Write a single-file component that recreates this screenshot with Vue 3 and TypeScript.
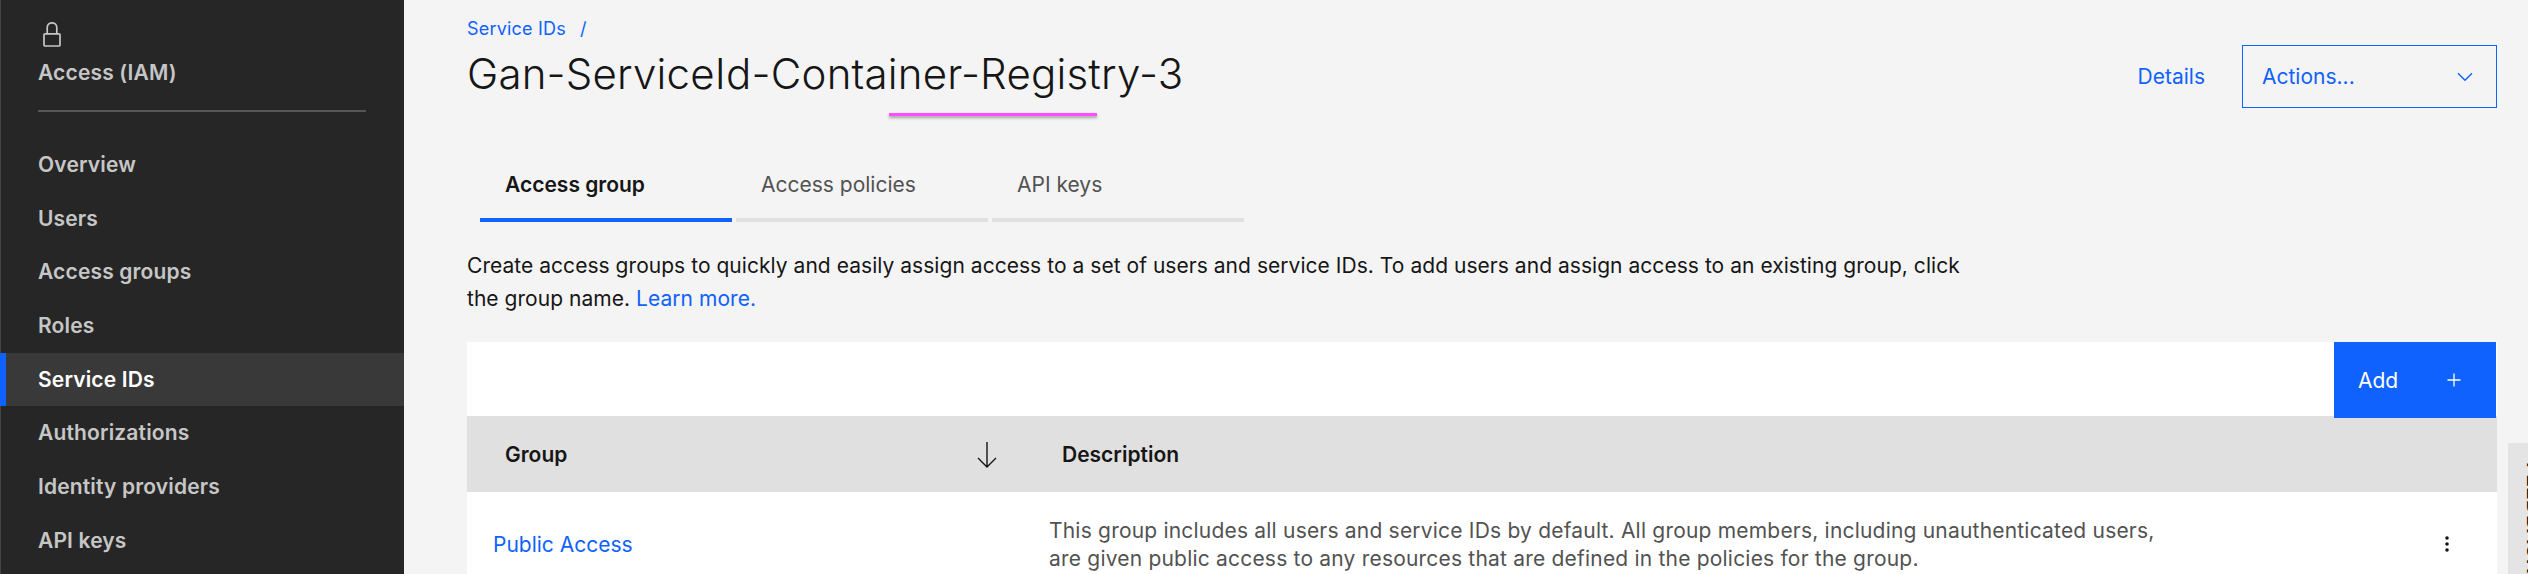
<script setup lang="ts">
const navItems = [
  { label: 'Overview' },
  { label: 'Users' },
  { label: 'Access groups' },
  { label: 'Roles' },
  { label: 'Service IDs', active: true },
  { label: 'Authorizations' },
  { label: 'Identity providers' },
  { label: 'API keys' },
]

const tabs = [
  { label: 'Access group', active: true },
  { label: 'Access policies' },
  { label: 'API keys' },
]
</script>

<template>
  <div class="page">
    <aside class="sidebar">
      <div class="side-head">
        <svg class="lock" width="18" height="25" viewBox="0 0 18 25" fill="none" stroke="#c6c6c6" stroke-width="1.7">
          <rect x="1" y="11.8" width="16" height="12.2" rx="1" />
          <path d="M4.2 11.8V5.6a4.8 4.8 0 0 1 9.6 0v6.2" />
        </svg>
        <div class="side-title">Access (IAM)</div>
      </div>
      <nav class="side-nav">
        <a v-for="item in navItems" :key="item.label" class="nav-item" :class="{ active: item.active }">{{ item.label }}</a>
      </nav>
    </aside>

    <main class="content">
      <header class="head">
        <div>
          <div class="crumb"><a>Service IDs</a><span class="slash">/</span></div>
          <h1 class="title">Gan-ServiceId-Container-Registry-3</h1>
        </div>
        <div class="head-actions">
          <a class="details">Details</a>
          <button class="actions">
            <span>Actions...</span>
            <svg width="16" height="10" viewBox="0 0 16 10" fill="none" stroke="#0f62fe" stroke-width="1.4"><path d="M1 1.2 8 8.2 15 1.2" /></svg>
          </button>
        </div>
      </header>

      <div class="tabs">
        <div v-for="tab in tabs" :key="tab.label" class="tab" :class="{ active: tab.active }">{{ tab.label }}</div>
      </div>

      <p class="intro">
        Create access groups to quickly and easily assign access to a set of users and service IDs. To add users and assign access to an existing group, click<br />
        the group name. <a>Learn more.</a>
      </p>

      <section class="table">
        <div class="toolbar">
          <button class="add">
            <span>Add</span>
            <svg width="14" height="14" viewBox="0 0 14 14" stroke="#fff" stroke-width="1.3"><path d="M7 0.5v13M0.5 7h13" /></svg>
          </button>
        </div>
        <div class="row thead">
          <div class="col-group">
            <span>Group</span>
            <svg width="20" height="27" viewBox="0 0 20 27" fill="none" stroke="#161616" stroke-width="1.4"><path d="M10 1v25M1 17l9 9 9-9" /></svg>
          </div>
          <div class="col-desc">Description</div>
        </div>
        <div class="row tbody">
          <a class="group-link">Public Access</a>
          <div class="desc">
            This group includes all users and service IDs by default. All group members, including unauthenticated users,<br />
            are given public access to any resources that are defined in the policies for the group.
          </div>
          <svg class="kebab" width="6" height="16" viewBox="0 0 6 16" fill="#161616"><circle cx="3" cy="2" r="1.8" /><circle cx="3" cy="8" r="1.8" /><circle cx="3" cy="14" r="1.8" /></svg>
        </div>
      </section>
    </main>

    <div class="pink"></div>
    <div class="feedback"><span>FEEDBACK</span></div>
  </div>
</template>

<style>
html, body { margin: 0; background: #f4f4f4; }
</style>

<style scoped>
.page {
  position: relative;
  display: flex;
  width: 2528px;
  height: 574px;
  overflow: hidden;
  background: #f4f4f4;
  font-family: Inter, "Noto Sans", sans-serif;
  color: #161616;
}

.sidebar {
  flex: 0 0 404px;
  box-sizing: border-box;
  background: #262626;
  border-left: 1px solid #444;
  color: #c6c6c6;
  font-size: 21px;
  font-weight: 600;
  letter-spacing: 0.15px;
}

.side-head {
  box-sizing: border-box;
  height: 112px;
  margin: 0 38px 0 37px;
  padding-top: 22px;
  border-bottom: 2px solid #565656;
}

.lock { display: block; margin: 0 0 11px 5px; }

.side-title { line-height: 30px; }

.side-nav { margin-top: 26px; }

.nav-item {
  display: block;
  height: 53.7px;
  line-height: 53.7px;
  padding-left: 37px;
}

.nav-item.active {
  margin-left: -1px;
  padding-left: 32px;
  border-left: 6px solid #0f62fe;
  background: #393939;
  color: #fff;
}

.content {
  flex: 1;
  min-width: 0;
  padding: 0 31px 0 63px;
}

.head {
  display: flex;
  justify-content: space-between;
  align-items: flex-start;
}

.crumb {
  margin-top: 17px;
  font-size: 18px;
  line-height: 24px;
  letter-spacing: 0.2px;
  color: #0f62fe;
}

.slash { margin-left: 14px; }

.title {
  margin: 6px 0 0;
  font-size: 42px;
  font-weight: 300;
  line-height: 54px;
  letter-spacing: 0.2px;
}

.head-actions {
  display: flex;
  align-items: center;
  margin-top: 45px;
}

.details {
  margin-right: 37px;
  font-size: 21px;
  color: #0f62fe;
}

.actions {
  display: flex;
  justify-content: space-between;
  align-items: center;
  box-sizing: border-box;
  width: 255px;
  height: 63px;
  padding: 0 23px 0 19px;
  border: 1px solid #0f62fe;
  background: transparent;
  font: inherit;
  font-size: 21px;
  color: #0f62fe;
}

.tabs {
  display: flex;
  margin: 61px 0 0 13px;
}

.tab {
  box-sizing: border-box;
  width: 252px;
  height: 53px;
  margin-right: 4px;
  padding-left: 25px;
  border-bottom: 4px solid #e0e0e0;
  font-size: 21px;
  line-height: 32px;
  color: #525252;
}

.tab.active {
  border-bottom-color: #0f62fe;
  font-weight: 600;
  color: #161616;
}

.intro {
  margin: 27px 0 0;
  font-size: 21px;
  line-height: 33px;
  letter-spacing: 0.04px;
}

.intro a, .group-link { color: #0f62fe; }

.table { margin-top: 27px; background: #fff; }

.toolbar { height: 74px; }

.add {
  display: flex;
  justify-content: space-between;
  align-items: center;
  position: relative;
  box-sizing: border-box;
  width: 162px;
  height: 76px;
  margin: 0 1px 0 auto;
  padding: 0 35px 0 24px;
  border: 0;
  background: #0f62fe;
  font: inherit;
  font-size: 21px;
  color: #fff;
}

.row { display: flex; }

.thead {
  height: 76px;
  align-items: center;
  background: #e0e0e0;
  font-size: 21px;
  font-weight: 600;
}

.col-group {
  display: flex;
  justify-content: space-between;
  align-items: center;
  box-sizing: border-box;
  width: 530px;
  padding: 0 0 0 38px;
}

.col-desc { margin-left: 65px; }

.tbody {
  position: relative;
  height: 100px;
  align-items: flex-start;
}

.group-link {
  flex: 0 0 582px;
  box-sizing: border-box;
  padding: 38px 0 0 26px;
  font-size: 21px;
  line-height: 30px;
}

.desc {
  padding-top: 25px;
  font-size: 21px;
  line-height: 28px;
  letter-spacing: 0.2px;
  color: #525252;
}

.kebab { position: absolute; left: 1977px; top: 44px; }

.pink {
  position: absolute;
  left: 889px;
  top: 113px;
  width: 208px;
  height: 3px;
  background: #ff4dff;
  box-shadow: 0 2px 3px rgba(0, 0, 0, 0.35);
}

.feedback {
  position: absolute;
  left: 2508px;
  top: 443px;
  width: 20px;
  height: 131px;
  background: #e4e4e4;
}

.feedback span {
  position: absolute;
  left: 16px;
  top: 19px;
  writing-mode: vertical-rl;
  font-size: 21px;
  font-weight: 600;
  line-height: 20px;
  white-space: nowrap;
}
</style>
